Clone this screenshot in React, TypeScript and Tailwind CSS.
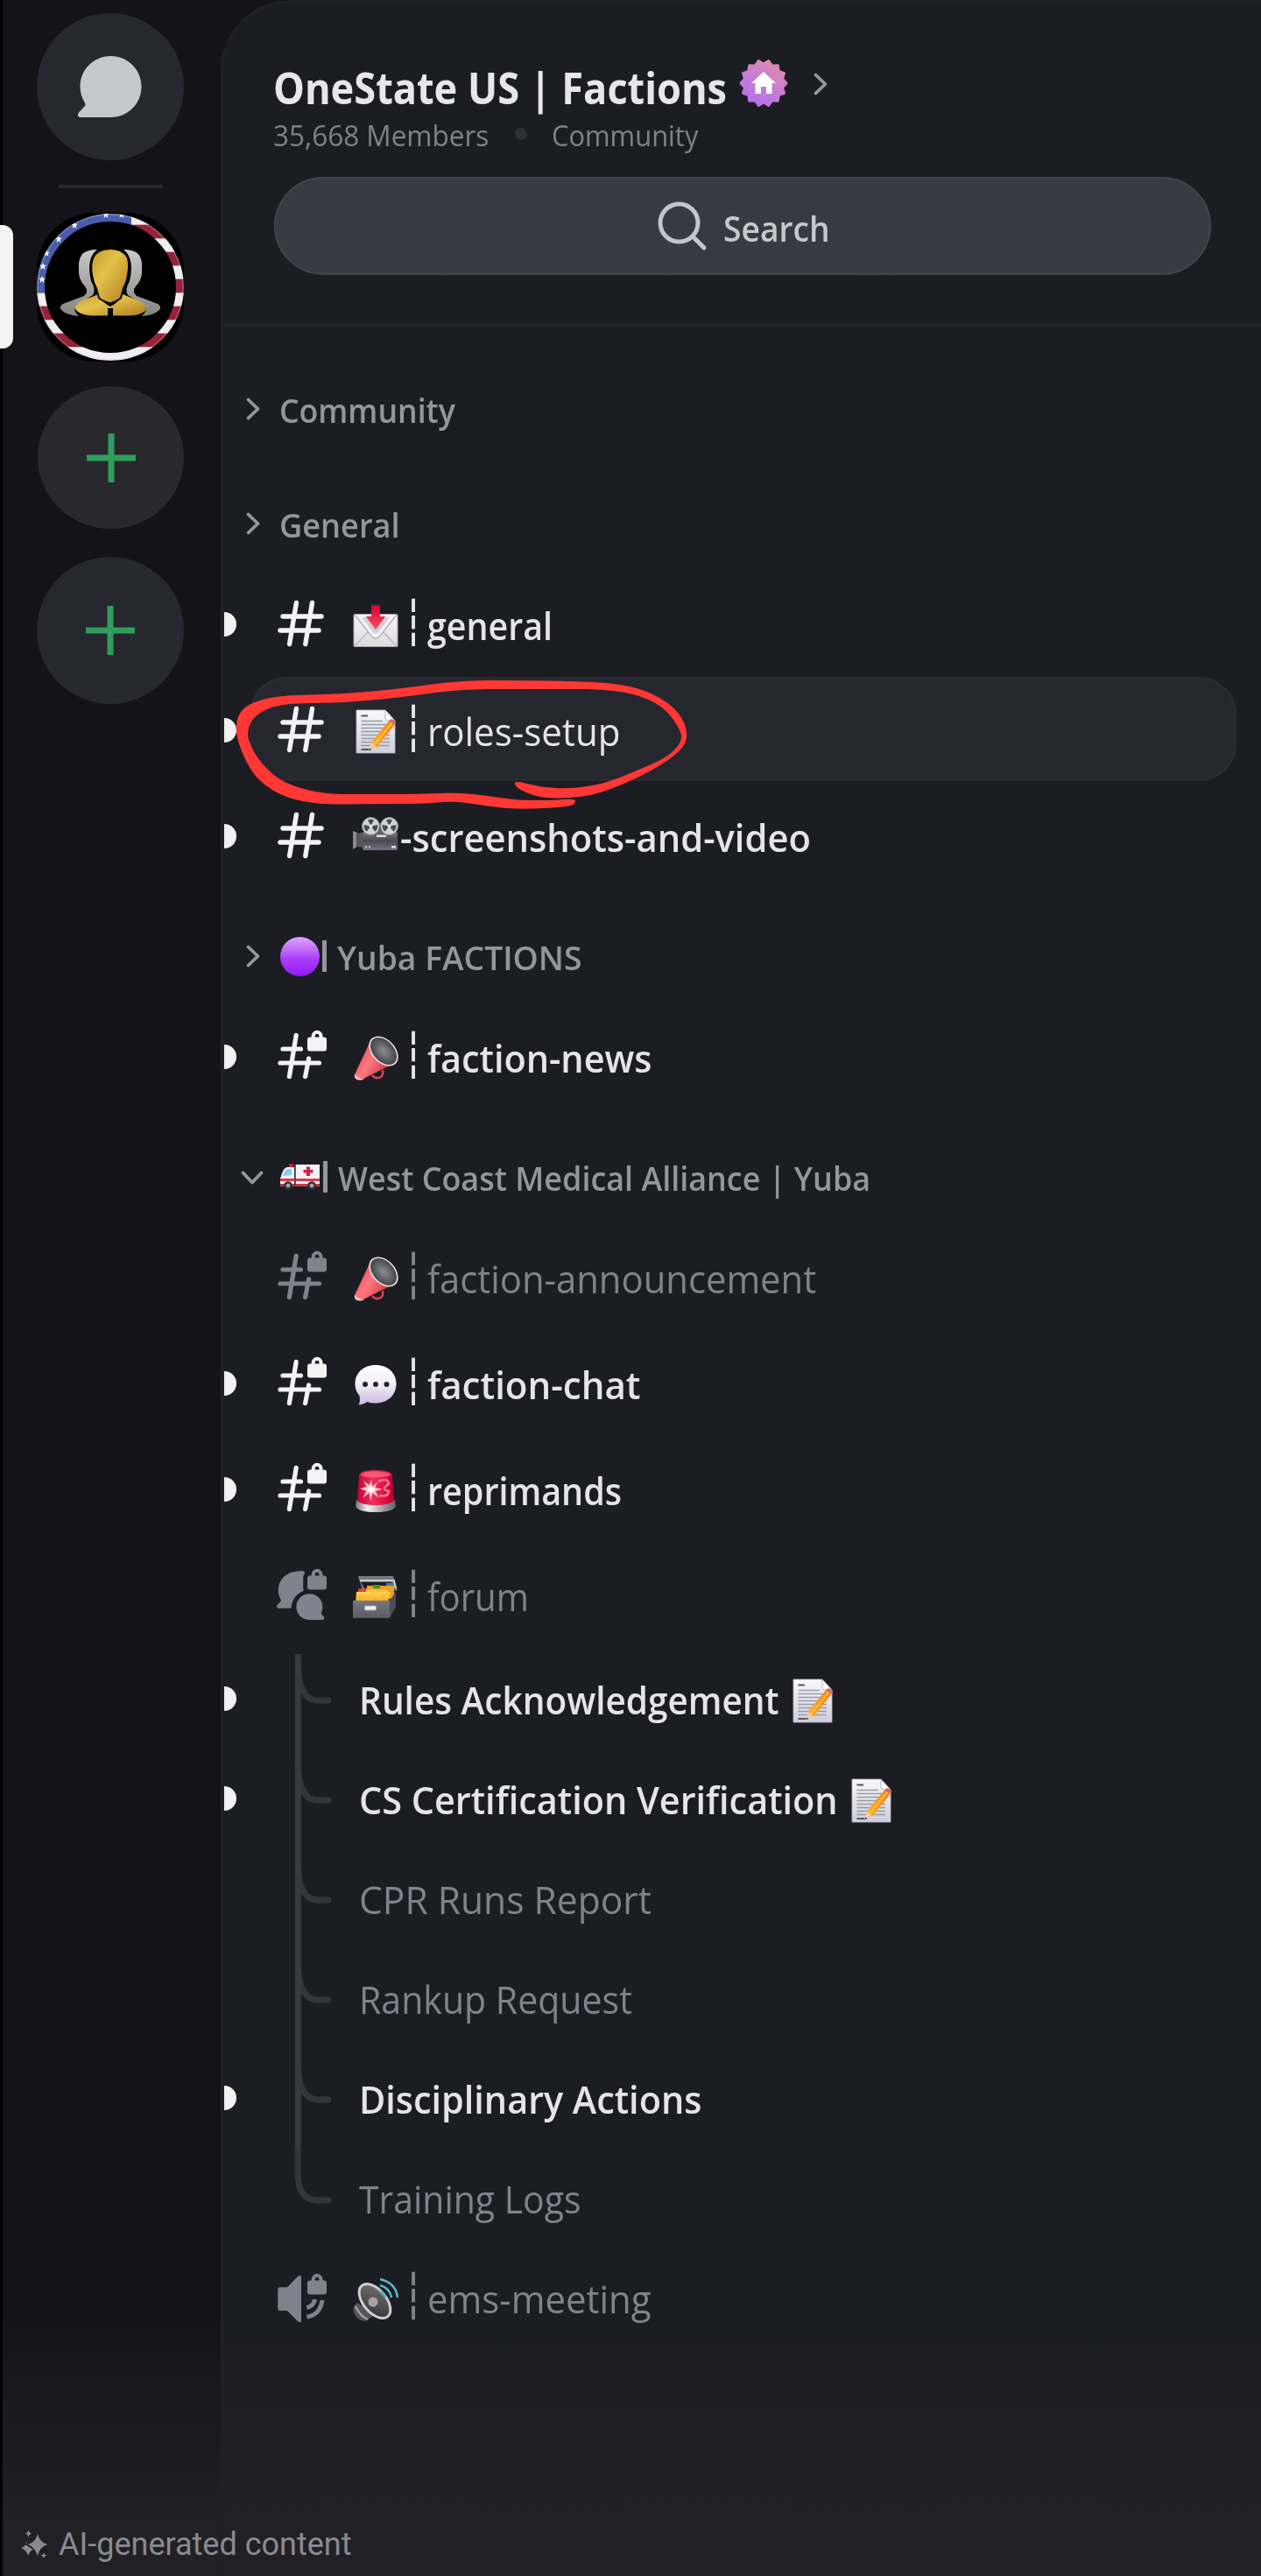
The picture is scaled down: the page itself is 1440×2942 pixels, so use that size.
import type { ReactNode } from "react";

type Point = [number, number];

type ChannelProps = {
  icon: ReactNode;
  emoji: ReactNode;
  name: string;
  unread?: boolean;
  active?: boolean;
  muted?: boolean;
  bar?: boolean;
  fit?: string;
};

function Lock({ y = 0 }: { y?: number }) {
  return (
    <g transform={`translate(0 ${y})`}>
      <rect x="36" y="7.5" width="22" height="16" rx="3" fill="currentColor" />
      <path
        d="M42.7 9V6.2a4.4 4.4 0 0 1 8.8 0V9"
        fill="none"
        stroke="currentColor"
        strokeWidth="4"
      />
    </g>
  );
}

function HashIcon() {
  return (
    <svg viewBox="0 0 60 60" className="size-[60px] overflow-visible">
      <path
        d="M8 21H52M5 37H49M23.4 5.5 15.6 52.5M41.5 5.5 33.8 52.5"
        fill="none"
        stroke="currentColor"
        strokeWidth="5.4"
        strokeLinecap="round"
      />
    </svg>
  );
}

function HashLockIcon() {
  return (
    <svg viewBox="0 0 60 60" className="size-[60px] overflow-visible">
      <path
        d="M8 21H28.5M5 37H49.5M23.2 5.5 15.4 52.5M37.6 32 33.6 52.5"
        fill="none"
        stroke="currentColor"
        strokeWidth="5.2"
        strokeLinecap="round"
      />
      <Lock />
    </svg>
  );
}

function ForumIcon() {
  return (
    <svg viewBox="0 0 60 60" className="size-[60px] overflow-visible" fill="currentColor">
      <path d="M31 2.3C33 2.6 33.4 4 32.6 5.4C31.4 7.5 31.2 9 31.2 11V21C31.2 23.5 32 24.6 31.2 25.3C23 28.5 18.5 35.5 17.8 43C17.7 44.3 17.2 44.8 16 44.8H3.5C.9 44.8 .3 42.5 1.8 40.8L5.3 37.2C6 36.5 6 35.4 5.3 34.2C-2.5 17.5 9 .6 31 2.3Z" />
      <path d="M38.3 28.3C47 28.3 53.4 35 53.4 43C53.4 46 52.7 48.6 51.6 50.6L54.6 54.2C56 56 55.2 58 53 58H38.3C30 58 23.4 51.4 23.4 43C23.4 35 30 28.3 38.3 28.3Z" />
      <Lock />
    </svg>
  );
}

function VoiceIcon() {
  return (
    <svg viewBox="0 0 60 60" className="size-[60px] overflow-visible">
      <path
        d="M2.3 21Q2.3 18.3 5 18.3H13L25 6Q29 3 29 7.5V56Q29 60 25 57L13 45H5Q2.3 45 2.3 42.5Z"
        fill="currentColor"
      />
      <path
        d="M35.5 41.5Q43.5 39.5 44.5 32M35.5 52Q50.5 50 53 33"
        fill="none"
        stroke="currentColor"
        strokeWidth="5"
      />
      <Lock y={3} />
    </svg>
  );
}

function InboxEmoji() {
  return (
    <svg viewBox="0 0 52 52" className="size-[52px] shrink-0">
      <defs>
        <linearGradient id="env" x2="0" y2="1">
          <stop stopColor="#f7f5f7" />
          <stop offset="1" stopColor="#dcdadd" />
        </linearGradient>
        <linearGradient id="arr" x2="0" y2="1">
          <stop stopColor="#d4002c" />
          <stop offset="1" stopColor="#ff4b68" />
        </linearGradient>
      </defs>
      <rect x="1" y="12.5" width="50" height="37" rx="1" fill="url(#env)" stroke="#a9a7aa" />
      <path d="M2 49 19 31M50 49 33 31" stroke="#b9b7ba" strokeWidth="1.2" fill="none" />
      <path d="M2 13 20 36Q26 44 32 36L50 13" fill="#f4f2f4" stroke="#b3b1b4" strokeWidth="1.3" />
      <path d="M10 16 23 33Q26 36 29 33L42 16" fill="#d2cfd3" />
      <path d="M21 2H31V15H37L26 30 15 15H21Z" fill="url(#arr)" />
    </svg>
  );
}

function MemoEmoji() {
  return (
    <svg viewBox="0 0 52 52" className="size-[52px] shrink-0">
      <defs>
        <linearGradient id="page" x2="0" y2="1">
          <stop stopColor="#f8f8fb" />
          <stop offset="1" stopColor="#cfcedd" />
        </linearGradient>
        <linearGradient id="pencil" x2="1" y2="0">
          <stop stopColor="#ffb12b" />
          <stop offset="1" stopColor="#ef8411" />
        </linearGradient>
      </defs>
      <path d="M4 1H37L48 13V50H4Z" fill="url(#page)" stroke="#b9b9c2" strokeWidth=".8" />
      <path d="M37 1V10Q37 13 40 13H48Z" fill="#fff" stroke="#a9a9b3" strokeWidth=".9" />
      <path d="M9.5 7.5H17M9.5 46H18" stroke="#55555f" strokeWidth="2" />
      <path
        d="M9.5 13.5H34M9.5 17.5H41M9.5 21.5H42M9.5 25.5H42M9.5 29.5H42M9.5 33.5H42M9.5 37.5H42M9.5 41.5H42"
        stroke="#9a9aa6"
        strokeWidth="1.3"
      />
      <path d="M20.5 38 41 13.5 47.5 18 27 43.5Z" fill="url(#pencil)" />
      <path d="M24 41 44.5 15.8" stroke="#ffc652" strokeWidth="1.5" />
      <path d="M20.5 38 27 43.5 18.5 47Z" fill="#f2cfa4" />
      <path d="M19.3 44.3 21.3 46 18.3 47.5Z" fill="#3a3a3f" />
      <path d="M41 13.5 42.8 11.5Q45 10.5 48 13 49.5 15 49 16.2L47.5 18Z" fill="#c7725c" />
    </svg>
  );
}

function Reel({ x }: { x: number }) {
  return (
    <g transform={`translate(${x} 12.5)`}>
      <circle r="10" fill="#d3d4d6" stroke="#8c8d90" strokeWidth="1" />
      <path
        d="M0 0-3.5-7A8 8 0 0 1 3.5-7ZM0 0 7.8-1.5A8 8 0 0 1 4.8 6.3ZM0 0-7.8-1.5A8 8 0 0 0-4.8 6.3Z"
        fill="#4c4d51"
      />
      <circle r="2" fill="#e9e9ea" />
    </g>
  );
}

function CameraEmoji() {
  return (
    <svg viewBox="0 0 52 52" className="size-[52px] shrink-0">
      <defs>
        <linearGradient id="cam" x2="0" y2="1">
          <stop stopColor="#77767a" />
          <stop offset=".5" stopColor="#4a494e" />
          <stop offset="1" stopColor="#77708a" />
        </linearGradient>
      </defs>
      <path d="M0 18 5 20V36L0 39Z" fill="#8b8b8e" />
      <path d="M4 21 14 19V37L4 36Z" fill="#55555a" />
      <rect x="11" y="19" width="40" height="21" rx="2" fill="url(#cam)" />
      <path d="M22 16H43V23H22Z" fill="#606064" />
      <Reel x={20.5} />
      <Reel x={41.5} />
      <path d="M27 22.500H38V25H27ZM44 35H49V37.500H44Z" fill="#dedde2" />
      <path d="M14 35H16V37.500H14ZM18 35H20V37.500H18Z" fill="#d7a6b7" />
    </svg>
  );
}

function MegaphoneEmoji() {
  return (
    <svg viewBox="0 0 52 52" className="size-[52px] shrink-0">
      <defs>
        <linearGradient id="horn" x1="0" y1=".2" x2="1" y2=".8">
          <stop stopColor="#d93a49" />
          <stop offset=".4" stopColor="#ff7b81" />
          <stop offset="1" stopColor="#bd2436" />
        </linearGradient>
        <radialGradient id="bell">
          <stop stopColor="#8a8d91" />
          <stop offset="1" stopColor="#414347" />
        </radialGradient>
      </defs>
      <path d="M22 45Q26 50 32 47 35 44 34 39" fill="none" stroke="#dc4557" strokeWidth="2.5" />
      <path d="M19 8 3 42Q2 47 6 49.5 11 51 14 48L46 32Z" fill="url(#horn)" />
      <path d="M2 43Q1 46 3 49 8 52 13 49 5 50 2 43Z" fill="#f3d7d8" />
      <ellipse
        cx="35"
        cy="17.5"
        rx="19"
        ry="12.5"
        transform="rotate(47 35 17.5)"
        fill="url(#bell)"
        stroke="#f2e4e4"
        strokeWidth="1.5"
      />
    </svg>
  );
}

function ChatEmoji() {
  return (
    <svg viewBox="0 0 52 52" className="size-[52px] shrink-0">
      <defs>
        <linearGradient id="chat" x2="0" y2="1">
          <stop stopColor="#ffffff" />
          <stop offset=".5" stopColor="#f1edf5" />
          <stop offset="1" stopColor="#c9b8e0" />
        </linearGradient>
      </defs>
      <path
        d="M26 3C40 3 49.5 12 49.5 24.5S40 46.5 26 46.5C22.5 46.5 19 46 16.5 45 13 47 10 48.5 6.5 48.5 8 46 8.3 42.5 7.5 38 4 34 2.5 29.5 2.5 24.5 2.5 12 12 3 26 3Z"
        fill="url(#chat)"
      />
      <circle cx="14" cy="25" r="3" fill="#242426" />
      <circle cx="26" cy="25" r="3" fill="#242426" />
      <circle cx="38.5" cy="25" r="3" fill="#242426" />
    </svg>
  );
}

function SirenEmoji() {
  return (
    <svg viewBox="0 0 52 52" className="size-[52px] shrink-0">
      <defs>
        <linearGradient id="siren" x2="1" y2="0">
          <stop stopColor="#c00036" />
          <stop offset=".4" stopColor="#f2305c" />
          <stop offset=".8" stopColor="#dc0c3e" />
          <stop offset="1" stopColor="#b0002e" />
        </linearGradient>
        <linearGradient id="base" x2="1" y2="0">
          <stop stopColor="#6f7275" />
          <stop offset=".3" stopColor="#f4f4f4" />
          <stop offset=".7" stopColor="#9a9da0" />
          <stop offset="1" stopColor="#5e6164" />
        </linearGradient>
      </defs>
      <path d="M4 36Q26 46 48 36L49 43Q47 50 26 50T3 43Z" fill="url(#base)" />
      <path d="M7 8Q8 2 26 2T45 8L47 37Q42 42 26 42T5 37Z" fill="url(#siren)" />
      <ellipse cx="26" cy="7" rx="17" ry="3.5" fill="#ff6d86" opacity=".7" />
      <path
        d="M29 15Q40 10 41 18 31 24 41 26 41 33 30 31"
        fill="none"
        stroke="#ff93aa"
        strokeWidth="2.5"
        opacity=".8"
      />
      <path
        d="M21 13 22.500 21 28 15 25.500 22 34 24 25.500 26 30 34 22.500 28 20 37 18.500 28 11 34 15.500 26 8 23 15.500 21 12 14 18.500 19Z"
        fill="#ffc3cf"
      />
      <circle cx="21" cy="24" r="3.5" fill="#fff" />
    </svg>
  );
}

function CardBoxEmoji() {
  return (
    <svg viewBox="0 0 52 52" className="size-[52px] shrink-0">
      <defs>
        <linearGradient id="box" x2="0" y2="1">
          <stop stopColor="#77777e" />
          <stop offset="1" stopColor="#5b5a66" />
        </linearGradient>
        <linearGradient id="folder" x2="0" y2="1">
          <stop stopColor="#ffd250" />
          <stop offset="1" stopColor="#f7a823" />
        </linearGradient>
      </defs>
      <path d="M6 3Q6 2 8 2H46L51 18 48 19 44 9H9L14 17 11 18Z" fill="#77787d" />
      <path d="M8 7H47L49 16" fill="none" stroke="#e8e8ea" strokeWidth="1.5" />
      <path d="M38 10H46V18H38Z" fill="#3286a3" />
      <path d="M16 13H47V28H16Z" fill="#ee9f20" />
      <path d="M23 12H31V17H23Z" fill="#4c8f2f" />
      <path d="M9 16.5H40V30H9Z" fill="#ffbb35" />
      <path d="M6 16.5H15V21H6Z" fill="#e63e45" />
      <path d="M4 20H43L40 32H3Z" fill="url(#folder)" />
      <path d="M42 30 49 20V37L42 50Z" fill="#4d4c56" />
      <path d="M0 30H42V50H0Z" fill="url(#box)" />
      <rect x="13.5" y="36" width="13" height="5" rx="1" fill="#f2f2f4" stroke="#a3a3a8" />
    </svg>
  );
}

function SpeakerEmoji() {
  return (
    <svg viewBox="0 0 52 52" className="size-[52px] shrink-0">
      <defs>
        <linearGradient id="cone" x2="1" y2="1">
          <stop stopColor="#77777a" />
          <stop offset="1" stopColor="#2e2e31" />
        </linearGradient>
      </defs>
      <path d="M5 30Q-1 34 1 41 4 50 14 51L26 43Z" fill="#55555a" />
      <path d="M3 34Q8 45 17 49" stroke="#a8a8aa" strokeWidth="2" fill="none" />
      <ellipse
        cx="25"
        cy="28"
        rx="23"
        ry="13"
        transform="rotate(50 25 28)"
        fill="url(#cone)"
        stroke="#d0cfcf"
        strokeWidth="3"
      />
      <circle cx="23" cy="29" r="5.5" fill="#a5a5a6" />
      <path
        d="M31 17Q36 19 37 24M31 10Q42 13 44 24M31 3Q49 7 51 24"
        stroke="#58b6c9"
        strokeWidth="2.6"
        fill="none"
      />
    </svg>
  );
}

function AmbulanceEmoji() {
  return (
    <svg viewBox="0 0 46 30" className="h-[30px] w-[46px] shrink-0">
      <path d="M10 0H15V5H10Z" fill="#c91f35" />
      <path d="M17 1H45V25H17Z" fill="#f4f2f5" />
      <path d="M16 4H8Q4 5 2 11L0 17V26H16Z" fill="#f1eef1" />
      <path d="M13 6H8Q5 7 3 14L13 13Z" fill="#84d2ea" />
      <path d="M0 17H45V20H0Z" fill="#dc3a50" />
      <path d="M0 23H45V26H0Z" fill="#c23b4c" />
      <path d="M30 3.5H34V7H37.5V10.5H34V14H30V10.5H26.5V7H30Z" fill="#d61f49" />
      <circle cx="9" cy="25" r="4.8" fill="#333338" />
      <circle cx="9" cy="25" r="2.3" fill="#aaaab0" />
      <circle cx="36" cy="25" r="4.8" fill="#333338" />
      <circle cx="36" cy="25" r="2.3" fill="#aaaab0" />
      <path d="M17 1V25" stroke="#3a3a40" strokeWidth="1.5" />
    </svg>
  );
}

function PurpleEmoji() {
  return (
    <span className="size-[45px] shrink-0 rounded-full bg-linear-to-b from-[#e2a0ff] via-[#ab3df8] via-55% to-[#9412f8]" />
  );
}

const stars: Point[] = [
  [79, 2],
  [97, 2],
  [43, 14],
  [25, 30],
  [11, 46],
  [7, 61],
  [6, 76],
];

function ServerBadge() {
  const stripes = Array.from({ length: 12 }, (_, i) => i);
  return (
    <svg viewBox="0 0 168 170" className="h-[170px] w-[168px]">
      <defs>
        <mask id="ring">
          <circle cx="84" cy="85" r="79.5" fill="none" stroke="#fff" strokeWidth="9" />
        </mask>
        <linearGradient id="gold" x2="1" y2="1">
          <stop stopColor="#c99a2c" />
          <stop offset=".4" stopColor="#e3c24a" />
          <stop offset="1" stopColor="#b07d1f" />
        </linearGradient>
        <linearGradient id="silver" x2="0" y2="1">
          <stop stopColor="#c9c9c9" />
          <stop offset="1" stopColor="#85857f" />
        </linearGradient>
      </defs>
      <rect width="168" height="170" rx="66" fill="#000" />
      <g mask="url(#ring)">
        {stripes.map((i) => (
          <rect
            key={i}
            y={-1.7 + i * 15.5}
            width="168"
            height="15.6"
            fill={i % 2 ? "#96233a" : "#f0eef0"}
          />
        ))}
        <rect width="108" height="91.5" fill="#4a5cab" />
        <g fill="#fff">
          {stars.map(([x, y]) => (
            <path
              key={`${x}-${y}`}
              transform={`translate(${x} ${y})`}
              d="M0-4 1-1.2 4-1.2 1.6.7 2.6 4 0 2-2.6 4-1.6.7-4-1.2-1-1.2Z"
            />
          ))}
        </g>
      </g>
      <circle
        cx="84"
        cy="85"
        r="83"
        fill="none"
        stroke="#c9c9d2"
        strokeOpacity=".5"
        strokeWidth="1"
      />
      <g fill="url(#silver)">
        <path d="M69 42Q58 42 52 47 47 54 48 64 47 76 55 84 60 90 54 95L30 104Q25 107 28 111 34 117 48 118 39 110 48 104L64 94Q68 88 62 78 56 52 69 42Z" />
        <path d="M99 42Q110 42 116 47 121 54 120 64 121 76 113 84 108 90 114 95L138 104Q143 107 140 111 134 117 120 118 129 110 120 104L104 94Q100 88 106 78 112 52 99 42Z" />
      </g>
      <path
        d="M70 93Q76 104 84 107 92 104 98 93 110 98 118 101 126 106 124 112 118 117 106 117.5H87V109H81V117.5H62Q49 117 44 110 43 105 52 100 64 96 70 93Z"
        fill="url(#gold)"
      />
      <path
        d="M84 42Q98 42 103 52 105 60 103 71 102 79 98 86L95 97Q90 101 84 102.5 77 101 72 97L69 86Q65 79 64 71 62 60 65 52 70 42 84 42Z"
        fill="url(#gold)"
        stroke="#080808"
        strokeWidth="4"
        paintOrder="stroke"
      />
    </svg>
  );
}

function Chevron({ down }: { down?: boolean }) {
  return (
    <svg
      viewBox="0 0 28 28"
      className={`size-[28px] shrink-0 ${down ? "rotate-90" : ""}`}
      fill="none"
      stroke="#94959f"
      strokeWidth="3.8"
      strokeLinecap="round"
      strokeLinejoin="round"
    >
      <path d="M9.5 3.500 20.500 14 9.500 24.500" />
    </svg>
  );
}

function Unread({ show }: { show?: boolean }) {
  return (
    <span
      className={`h-[28px] w-[14px] shrink-0 rounded-r-full ${show ? "bg-[#f1f1f2]" : ""}`}
    />
  );
}

function Category({
  name,
  emoji,
  open,
  fit = "",
}: {
  name: string;
  emoji?: ReactNode;
  open?: boolean;
  fit?: string;
}) {
  return (
    <div className="mt-[23px] flex h-[108px] items-center pl-[18px] text-[38.5px] font-semibold text-[#94959f]">
      <Chevron down={open} />
      <span className="ml-[18px] flex items-center">
        {emoji && (
          <>
            {emoji}
            <span className="mr-[13px] ml-[3px] h-[36px] w-[5px] bg-[#94959f]" />
          </>
        )}
        <span className={`-ml-px origin-left pt-[3px] whitespace-pre ${fit}`}>{name}</span>
      </span>
    </div>
  );
}

function Channel({ icon, emoji, name, unread, active, muted, bar = true, fit = "" }: ChannelProps) {
  const tone = muted ? "text-[#80828d]" : "text-[#e4e4e9]";
  const weight = muted || active ? "font-normal" : "font-semibold";
  return (
    <div className="relative flex h-[121px] items-center">
      {active && (
        <span className="absolute top-0 right-[28px] left-[29px] h-[119px] rounded-[42px] border-[3px] border-[#2a2a31] bg-[#26262f]" />
      )}
      <div className={`relative flex h-full items-center ${tone}`}>
        <Unread show={unread} />
        <span className={`ml-[45px] ${muted ? "" : "text-[#f3f3f4]"}`}>{icon}</span>
        <span className="mt-[5px] ml-[28px] flex">{emoji}</span>
        {bar && (
          <span
            className={`-mt-[4px] ml-[6px] flex w-[22px] justify-center font-['DejaVu_Sans_Mono'] text-[50px] leading-none ${
              muted || active ? "" : "font-bold"
            }`}
          >
            ┆
          </span>
        )}
        <span
          className={`origin-left pt-[3px] text-[44px] whitespace-pre ${bar ? "ml-[5px]" : "ml-[2px]"} ${weight} ${fit}`}
        >
          {name}
        </span>
        {active && <Scribble />}
      </div>
    </div>
  );
}

function Thread({
  name,
  memo,
  unread,
  first,
  last,
  fit = "",
}: {
  name: string;
  memo?: boolean;
  unread?: boolean;
  first?: boolean;
  last?: boolean;
  fit?: string;
}) {
  return (
    <div className="flex h-[114px] items-center">
      <Unread show={unread} />
      <svg
        viewBox="0 0 50 114"
        className="ml-[66px] h-[114px] w-[50px] shrink-0"
        fill="none"
        strokeWidth="7"
        stroke="#33353d"
      >
        <path d={last ? "M4.3 0V30Q4.3 60 27 60H37" : "M4.3 15Q4.3 59 27 59H37"} />
        <path d={last ? "M30 60H39" : "M30 59H39"} strokeLinecap="round" />
        {!last && <path d={first ? "M4.3 6V114" : "M4.3 0V114"} stroke="#383a43" />}
      </svg>
      <span
        className={`ml-[24px] origin-left pt-[2px] text-[44px] whitespace-pre ${
          unread ? "font-semibold text-[#e4e4e9]" : "text-[#80828d]"
        } ${fit}`}
      >
        {name}
      </span>
      {memo && (
        <span className="mt-[5px] ml-[12px]">
          <MemoEmoji />
        </span>
      )}
    </div>
  );
}

// Outline of the hand-drawn marker loop, outer edge first, then back inside.
const loop: Point[] = [
  [658, 916], [652, 921], [610, 924], [573, 923], [540, 918], [517, 915], [484, 918],
  [418, 918], [366, 919], [325, 911], [295, 892], [279, 867], [268, 835], [273, 813],
  [288, 802], [320, 794], [388, 793], [462, 786], [525, 777], [590, 777], [658, 778],
  [710, 781], [747, 792], [776, 813], [787, 840], [776, 860], [736, 885], [684, 907],
  [647, 912], [617, 911], [595, 903], [586, 895], [591, 892], [617, 899], [651, 901],
  [691, 895], [732, 878], [762, 865], [779, 847], [777, 833], [758, 807], [725, 792],
  [684, 787], [654, 787], [590, 787], [525, 787], [462, 796], [388, 803], [323, 803],
  [292, 815], [281, 835], [288, 857], [303, 877], [325, 895], [369, 907], [418, 907],
  [480, 907], [521, 905], [558, 909], [591, 914], [632, 914], [655, 912],
];

function smooth(points: Point[]) {
  const mid = (a: Point, b: Point) => `${(a[0] + b[0]) / 2} ${(a[1] + b[1]) / 2}`;
  const n = points.length;
  let d = `M${mid(points[n - 1], points[0])}`;
  points.forEach((p, i) => {
    d += `Q${p[0]} ${p[1]} ${mid(p, points[(i + 1) % n])}`;
  });
  return `${d}Z`;
}

function Scribble() {
  return (
    <svg
      viewBox="256 773 544 160"
      className="absolute top-0 left-0 z-10 h-[160px] w-[544px] max-w-none"
    >
      <path d={smooth(loop)} fill="#ff3835" />
    </svg>
  );
}

function Plus() {
  return (
    <svg viewBox="0 0 60 60" className="size-[60px]" stroke="#2f9e5c" strokeWidth="7">
      <path d="M2 30H58M30 2V58" />
    </svg>
  );
}

// 14 rounded teeth around the badge
const teeth = Array.from({ length: 28 }, (_, i) => {
  const r = i % 2 ? 22 : 26;
  const a = (i * Math.PI) / 14;
  return `${(r * Math.cos(a)).toFixed(2)},${(r * Math.sin(a)).toFixed(2)}`;
}).join(" ");

function BoostBadge() {
  return (
    <svg viewBox="-28 -28 56 56" className="size-[56px]">
      <defs>
        <linearGradient id="boost" x1=".2" y1="1" x2=".8" y2="0">
          <stop stopColor="#b26ff7" />
          <stop offset="1" stopColor="#e08bac" />
        </linearGradient>
      </defs>
      <polygon
        points={teeth}
        fill="url(#boost)"
        stroke="url(#boost)"
        strokeWidth="3"
        strokeLinejoin="round"
      />
      <path d="M0-13 14 0H9.5V12H3V4H-3V12H-9.5V0H-14Z" fill="#fff" />
    </svg>
  );
}

function Rail() {
  return (
    <aside className="flex w-[252px] shrink-0 flex-col border-l-[3px] border-[#030304] bg-linear-to-b from-[#141318] from-90% to-[#212025] to-98%">
      <div className="mt-[15px] ml-[39px] flex size-[168px] items-center justify-center rounded-full bg-[#27272f]">
        <svg viewBox="0 0 74 72" className="-ml-[3px] h-[72px] w-[74px]" fill="#c7c8ce">
          <path d="M38.5 1C58 1 73.5 16.5 73.5 36S58 71 38.5 71H4C.5 71 0 67.5 2.5 65L8.5 58.5Q10 57 9 54.5C5.5 49 3.5 43 3.5 36 3.5 16.5 19 1 38.5 1Z" />
        </svg>
      </div>
      <div className="mt-[28px] ml-[64px] h-[4px] w-[119px] bg-[#28282f]" />
      <div className="mt-[28px] -ml-[3px] flex">
        <span className="mt-[14px] mr-[27px] h-[141px] w-[15px] rounded-r-[12px] bg-[#f3f3f3]" />
        <ServerBadge />
      </div>
      <div className="mt-[28px] ml-[40px] flex h-[163px] w-[167px] items-center justify-center rounded-[50%] bg-[#28282d]">
        <Plus />
      </div>
      <div className="mt-[32px] ml-[39px] flex size-[168px] items-center justify-center rounded-full bg-[#27272f]">
        <Plus />
      </div>
    </aside>
  );
}

function Header() {
  return (
    <header className="border-b-[4px] border-[#25262b] pt-[64px] pb-[55px] pl-[57px]">
      <div className="flex h-[60px] items-center">
        <h1 className="-ml-px w-[517px] origin-left scale-x-[.903] pt-[3px] text-[50px] leading-[60px] font-bold whitespace-pre text-[#e6e6eb]">
          OneState US | Factions
        </h1>
        <span className="-mt-[6px] ml-[15px]">
          <BoostBadge />
        </span>
        <span className="-mt-[5px] ml-[22px]">
          <Chevron />
        </span>
      </div>
      <div className="mt-[4px] flex h-[44px] items-center text-[32px] text-[#7f818c]">
        <span className="-ml-px w-[247px] origin-left scale-x-[.984] pt-px whitespace-pre">
          35,668 Members
        </span>
        <span className="mx-[29px] -mt-[2px] size-[14px] rounded-full bg-[#2d3035]" />
        <span className="-ml-px origin-left scale-x-[.965] pt-px">Community</span>
      </div>
      <div className="mt-[26px] flex h-[112px] w-[1070px] items-center rounded-full border-[2px] border-[#42444d] bg-[#383a43] pl-[435px]">
        <svg
          viewBox="0 0 58 58"
          className="size-[58px]"
          fill="none"
          stroke="#c5c6cc"
          strokeWidth="5"
          strokeLinecap="round"
        >
          <circle cx="25.5" cy="25.5" r="21.5" />
          <path d="M41 41 54 54" />
        </svg>
        <span className="ml-[18px] origin-left scale-x-[.93] pt-[5px] text-[40px] font-semibold text-[#c7c8ce]">
          Search
        </span>
      </div>
    </header>
  );
}

export default function App() {
  return (
    <div className="relative flex h-[2942px] w-[1440px] overflow-hidden bg-[#141318] font-['Open_Sans',sans-serif]">
      <Rail />
      <main className="min-w-0 flex-1 rounded-tl-[80px] border-t-[4px] border-l-[4px] border-[#1f2025] bg-linear-to-b from-[#1c1d22] from-90% to-[#212025] to-98%">
        <Header />
        <nav className="pt-[17px]">
          <Category name="Community" fit="scale-x-[.926]" />
          <Category name="General" fit="scale-x-[.94]" />
          <Channel
            icon={<HashIcon />}
            emoji={<InboxEmoji />}
            name="general"
            unread
            fit="scale-x-[.895]"
          />
          <Channel
            icon={<HashIcon />}
            emoji={<MemoEmoji />}
            name="roles-setup"
            unread
            active
            fit="scale-x-[.956]"
          />
          <Channel
            icon={<HashIcon />}
            emoji={<CameraEmoji />}
            name="-screenshots-and-video"
            unread
            bar={false}
            fit="scale-x-[.948]"
          />
          <Category name="Yuba FACTIONS" emoji={<PurpleEmoji />} fit="scale-x-[.967]" />
          <Channel
            icon={<HashLockIcon />}
            emoji={<MegaphoneEmoji />}
            name="faction-news"
            unread
            fit="scale-x-[.941]"
          />
          <Category
            name="West Coast Medical Alliance | Yuba"
            emoji={<AmbulanceEmoji />}
            open
            fit="scale-x-[.933]"
          />
          <Channel
            icon={<HashLockIcon />}
            emoji={<MegaphoneEmoji />}
            name="faction-announcement"
            muted
            fit="scale-x-[.95]"
          />
          <Channel
            icon={<HashLockIcon />}
            emoji={<ChatEmoji />}
            name="faction-chat"
            unread
            fit="scale-x-[.956]"
          />
          <Channel
            icon={<HashLockIcon />}
            emoji={<SirenEmoji />}
            name="reprimands"
            unread
            fit="scale-x-[.898]"
          />
          <Channel
            icon={<ForumIcon />}
            emoji={<CardBoxEmoji />}
            name="forum"
            muted
            fit="scale-x-[.912]"
          />
          <div className="pt-px">
            <Thread
              name="Rules Acknowledgement"
              memo
              unread
              first
              fit="scale-x-[.921] -mr-[41px]"
            />
            <Thread
              name="CS Certification Verification"
              memo
              unread
              fit="scale-x-[.941] -mr-[34px]"
            />
            <Thread name="CPR Runs Report" fit="scale-x-[.967]" />
            <Thread name="Rankup Request" fit="scale-x-[.933]" />
            <Thread name="Disciplinary Actions" unread fit="scale-x-[.94]" />
            <Thread name="Training Logs" last fit="scale-x-[.93]" />
          </div>
          <div className="-mt-[4px]">
            <Channel
              icon={<VoiceIcon />}
              emoji={<SpeakerEmoji />}
              name="ems-meeting"
              muted
              fit="scale-x-[.952]"
            />
          </div>
        </nav>
      </main>
      <footer className="absolute bottom-[12px] left-[23px] flex h-[48px] items-center font-['Roboto'] text-[36px] text-[#8b8a8f]">
        <svg viewBox="0 0 34 36" className="mr-[10px] h-[36px] w-[34px]" fill="currentColor">
          <path d="M20 6Q22 15 31 18 22 21 20 31 17 21 9 18 18 15 20 6Z" />
          <path d="M9 13 6 18 15 24Q11 25 9 31 7 24 1 22 7 20 9 13Z" />
          <path d="M9.5 1Q10 5 13.5 5.5 10 6 9.5 10 9 6 5.5 5.5 9 5 9.5 1ZM27 27Q27.5 30 30.5 30.5 27.5 31 27 34 26.5 31 23.5 30.5 26.5 30 27 27Z" />
        </svg>
        AI-generated content
      </footer>
    </div>
  );
}
